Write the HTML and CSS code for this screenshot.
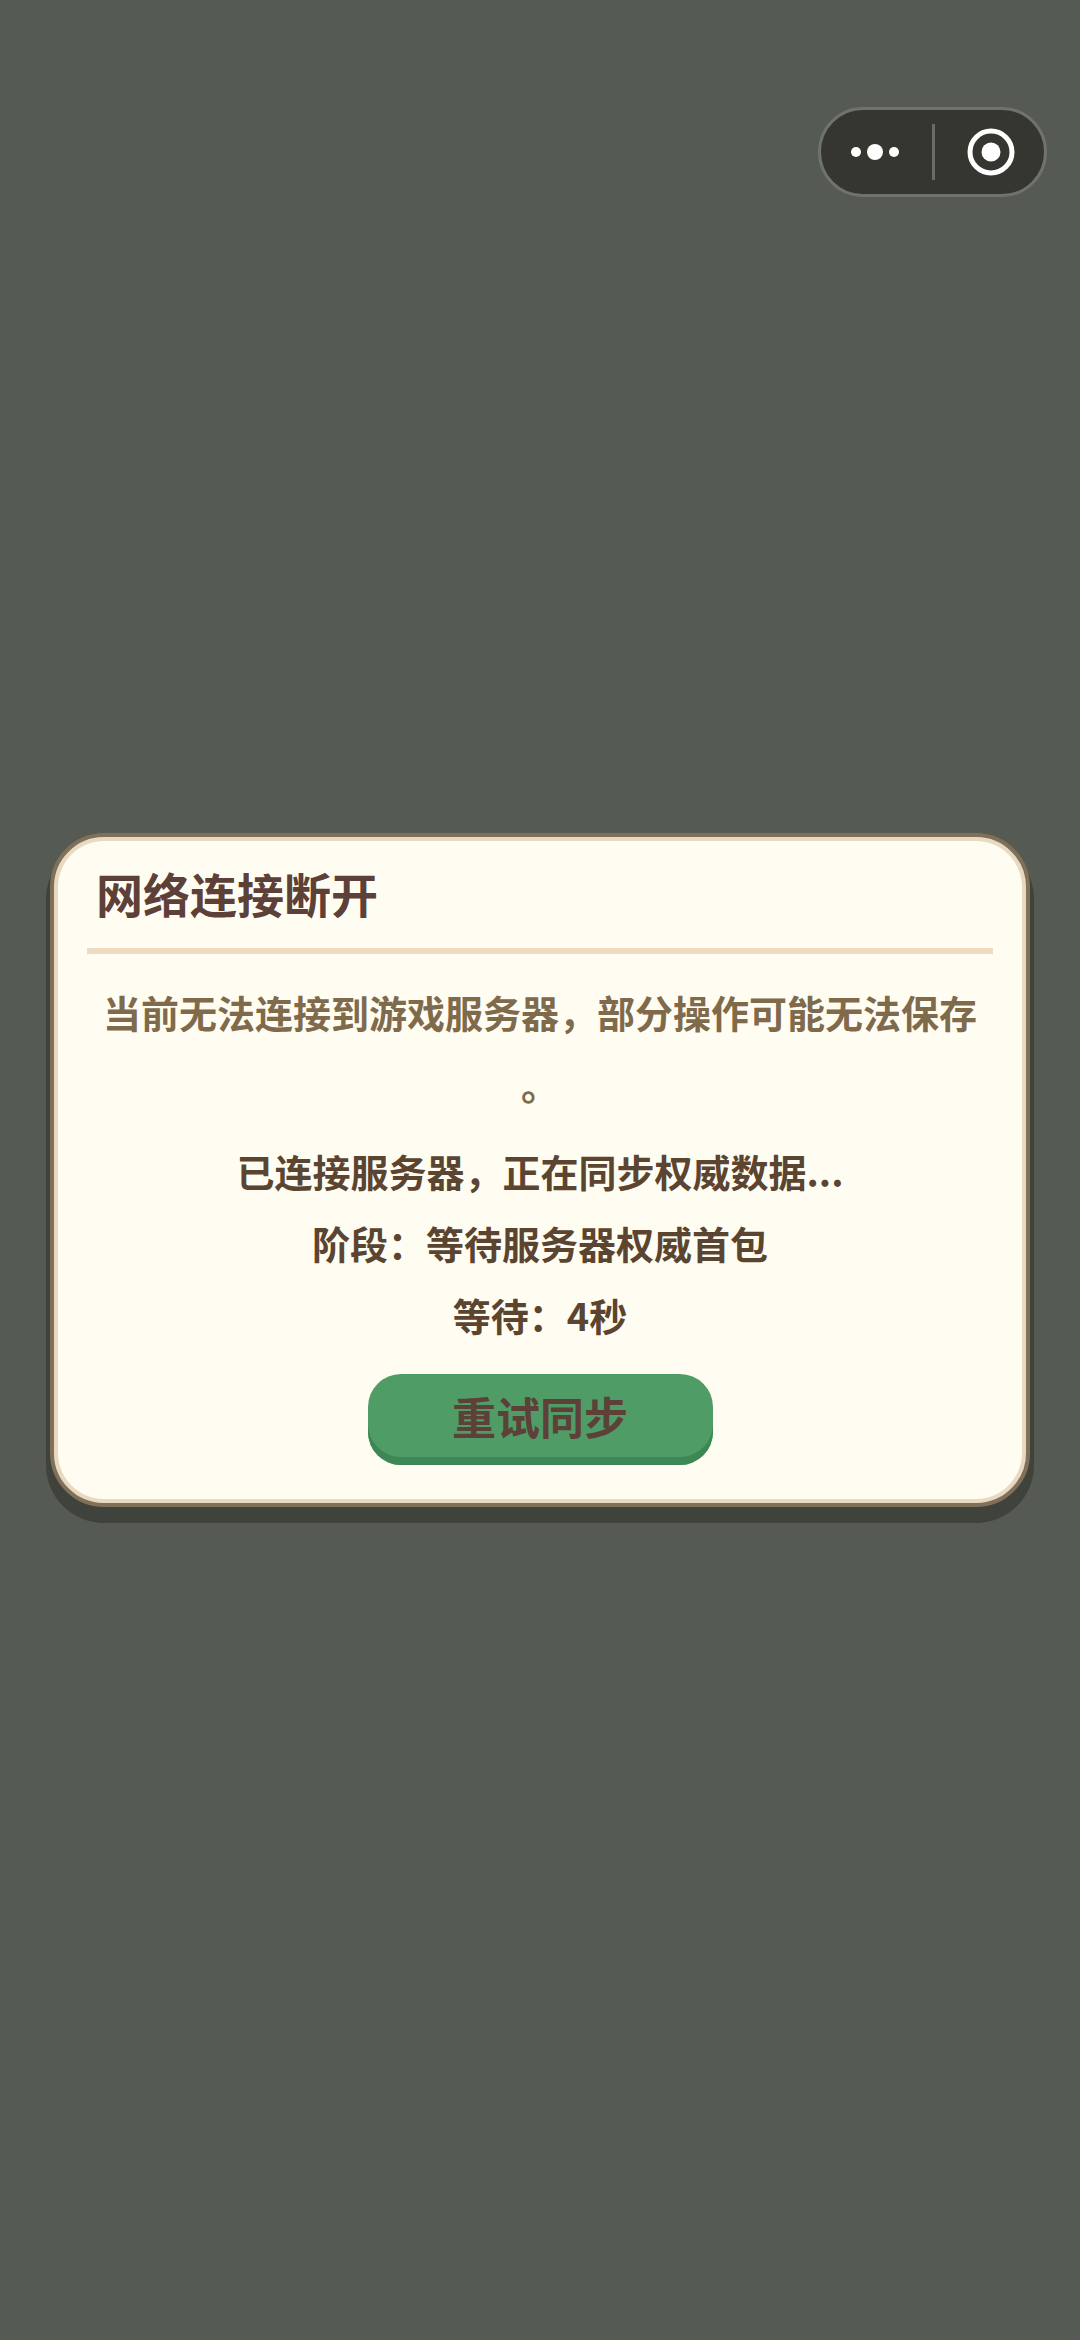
FILE: index.html
```html
<!DOCTYPE html>
<html lang="zh-CN">
<head>
<meta charset="utf-8">
<title>网络连接断开</title>
<link rel="stylesheet" href="styles.css">
</head>
<body>
<div class="capsule">
  <div class="capsule-side capsule-more">
    <svg width="64" height="20" viewBox="0 0 64 20"><circle cx="13" cy="10" r="5" fill="#fff"/><circle cx="32" cy="10" r="8" fill="#fff"/><circle cx="51" cy="10" r="5" fill="#fff"/></svg>
  </div>
  <div class="capsule-line"></div>
  <div class="capsule-side capsule-close">
    <svg width="48" height="48" viewBox="0 0 48 48"><circle cx="24" cy="24" r="21" fill="none" stroke="#fff" stroke-width="5"/><circle cx="24" cy="24" r="9.5" fill="#fff"/></svg>
  </div>
</div>
<main class="page">
  <section class="card">
    <h1 class="title">网络连接断开</h1>
    <div class="rule"></div>
    <p class="message">当前无法连接到游戏服务器，部分操作可能无法保存。</p>
    <div class="status">
      <p>已连接服务器，正在同步权威数据...</p>
      <p>阶段：等待服务器权威首包</p>
      <p>等待：4秒</p>
    </div>
    <button class="retry" type="button">重试同步</button>
  </section>
</main>
</body>
</html>
```
FILE: styles.css
```css
* { box-sizing: border-box; }
html, body { margin: 0; height: 100%; }
body {
  position: relative;
  width: 1080px;
  height: 2340px;
  overflow: hidden;
  background: #555a53;
  font-family: "Noto Sans CJK SC", "Noto Sans", sans-serif;
}
.capsule {
  position: absolute;
  left: 818px;
  top: 107px;
  width: 229px;
  height: 90px;
  display: flex;
  align-items: center;
  background: #353630;
  border: 3px solid #70736d;
  border-radius: 45px;
}
.capsule-side { flex: 1; display: flex; align-items: center; justify-content: center; }
.capsule-more { padding-right: 4px; }
.capsule-close { padding-left: 2px; }
.capsule-line { width: 3px; height: 56px; background: #6a6c66; }
.page {
  height: 100%;
  padding-top: 833px;
  display: flex;
  justify-content: center;
  align-items: flex-start;
}
.card {
  width: 980px;
  height: 674px;
  padding: 0 33px;
  display: flex;
  flex-direction: column;
  align-items: stretch;
  background: #fffdf2;
  border: 4px solid #80705a;
  border-radius: 54px;
  box-shadow: inset 0 0 0 4px #e9d9c0, 0 12px 0 4px #40423c;
}
.title {
  margin: 0;
  padding: 25px 0 0 9px;
  height: 111px;
  font-size: 47px;
  line-height: 62px;
  font-weight: 700;
  color: #5d4037;
}
.rule { height: 6px; background: #efdcc0; flex: none; }
.message {
  margin: 22px 0 0;
  padding: 0 8px;
  font-size: 38px;
  line-height: 72px;
  font-weight: 700;
  color: #7f6a4c;
  text-align: center;
  line-break: anywhere;
}
.status { margin-top: 15px; }
.status p {
  margin: 0;
  font-size: 38px;
  line-height: 72px;
  font-weight: 700;
  color: #5c4530;
  text-align: center;
}
.retry {
  align-self: center;
  width: 345px;
  height: 91px;
  margin-top: 23px;
  padding: 0 0 8px;
  border: 0;
  border-radius: 33px;
  background: #4f9c66;
  box-shadow: inset 0 -8px 0 #3d8755;
  font-family: inherit;
  font-size: 44px;
  font-weight: 700;
  color: #5d4037;
}
```
